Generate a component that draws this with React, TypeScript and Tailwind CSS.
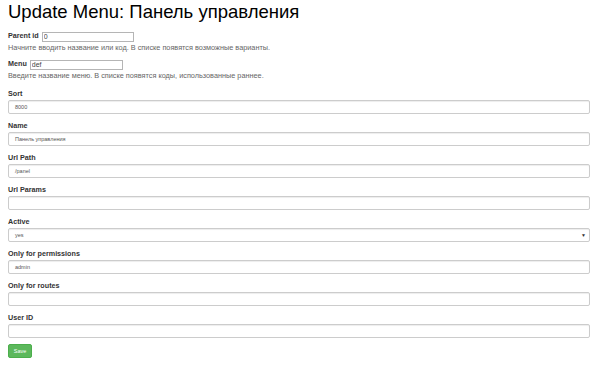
import React from 'react';

const fields = [
  { label: 'Sort', value: '8000' },
  { label: 'Name', value: 'Панель управления' },
  { label: 'Url Path', value: '/panel' },
  { label: 'Url Params', value: '' },
  { label: 'Active', value: 'yes', select: true },
  { label: 'Only for permissions', value: 'admin' },
  { label: 'Only for routes', value: '' },
  { label: 'User ID', value: '' },
];

export default function App() {
  return (
    <div className="min-h-[367px] bg-white px-2 text-[#333]" style={{ fontFamily: '"Liberation Sans", Arial, sans-serif' }}>
      <h1 className="pt-[1px] text-[18.5px] leading-[22px] text-black">Update Menu: Панель управления</h1>

      <div className="mt-[8px] flex h-[11px] items-center">
        <span className="text-[7.2px] font-bold">Parent id</span>
        <input
          readOnly
          value="0"
          className="ml-[3px] h-[10px] w-[92px] border border-[#b5b5b5] px-[1px] text-[7px] leading-[8px] text-[#444] outline-none"
        />
      </div>
      <p className="mt-[1px] text-[7.3px] leading-[10px] text-[#666]">
        Начните вводить название или код. В списке появятся возможные варианты.
      </p>

      <div className="mt-[6px] flex h-[11px] items-center">
        <span className="text-[7.2px] font-bold">Menu</span>
        <input
          readOnly
          value="def"
          className="ml-[3px] h-[10px] w-[93px] border border-[#b5b5b5] px-[1px] text-[7px] leading-[8px] text-[#444] outline-none"
        />
      </div>
      <p className="mt-[1px] text-[7.3px] leading-[10px] text-[#666]">
        Введите название меню. В списке появятся коды, использованные раннее.
      </p>

      <div className="mt-[7px] flex w-[582px] flex-col gap-[6px]">
        {fields.map((f) => (
          <div key={f.label} className="flex flex-col">
            <label className="text-[7.2px] font-bold leading-[12px]">{f.label}</label>
            <div className="relative flex h-[14px] items-center rounded-[2px] border border-[#ccc] px-[6px] shadow-[inset_0_1px_1px_rgba(0,0,0,0.075)]">
              <span className="text-[5.5px] leading-[8px] text-[#555]">{f.value}</span>
              {f.select && (
                <span className="absolute right-[3px] top-[3px] text-[5px] leading-[6px] text-[#333]">▼</span>
              )}
            </div>
          </div>
        ))}
      </div>

      <button className="mt-[6px] flex h-[14px] w-[24px] items-center justify-center rounded-[2px] border border-[#4cae4c] bg-[#5cb85c] text-[5.5px] text-white">
        Save
      </button>
    </div>
  );
}
